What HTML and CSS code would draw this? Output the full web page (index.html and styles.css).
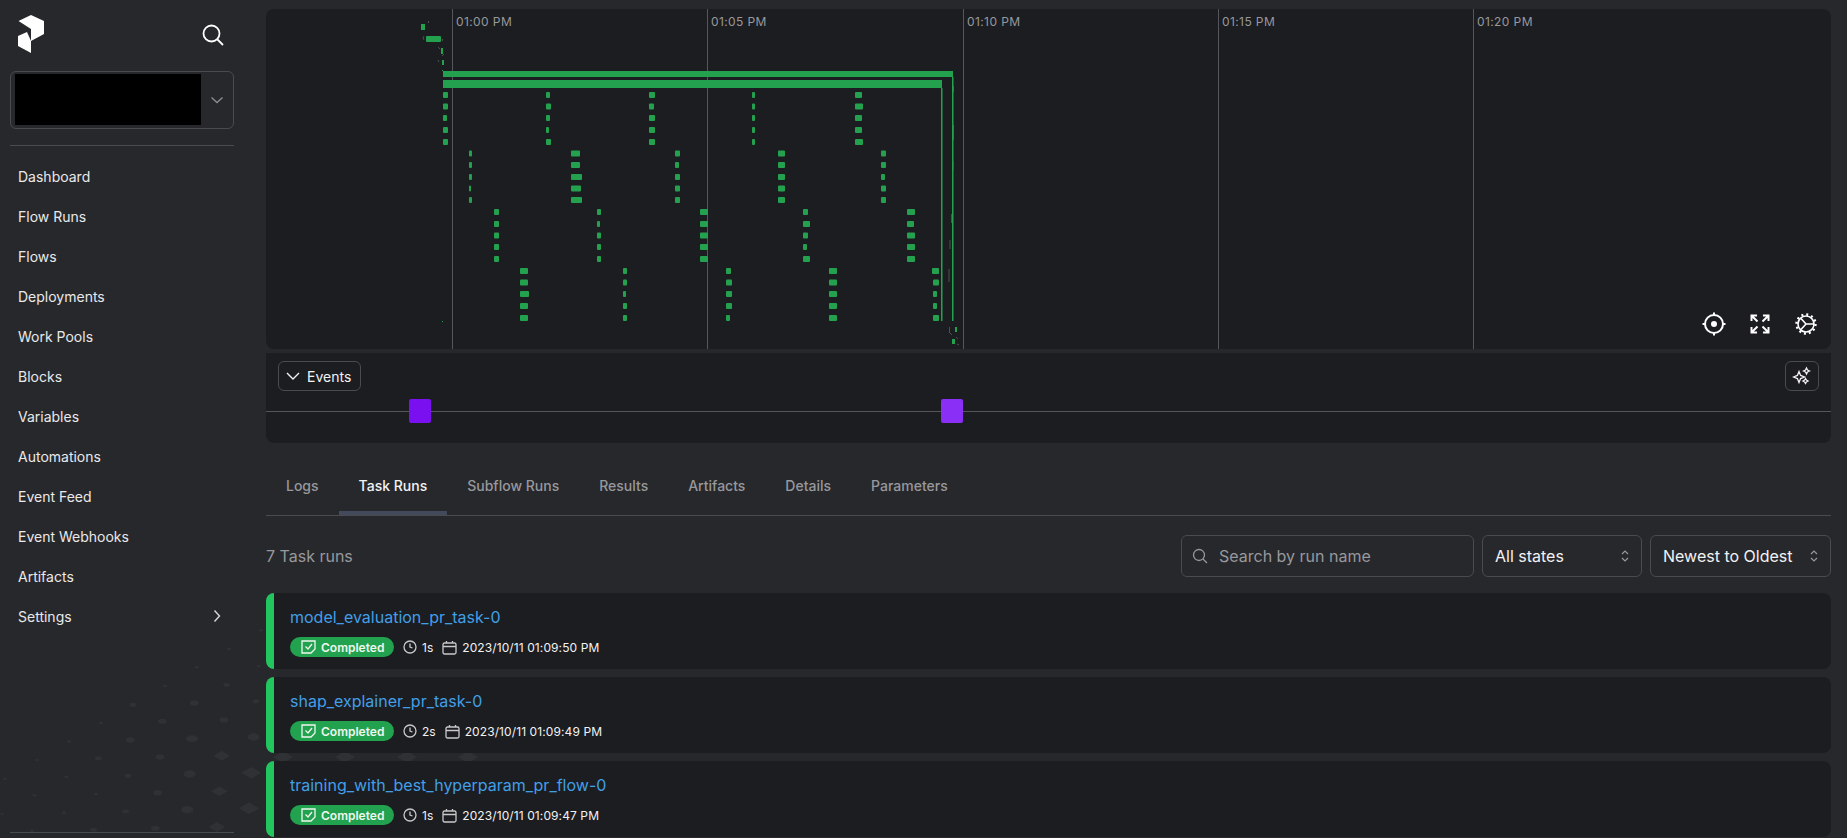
FILE: index.html
```html
<!DOCTYPE html>
<html lang="en">
<head>
<meta charset="utf-8">
<title>Flow run</title>
<link rel="stylesheet" href="styles.css">
</head>
<body>
<svg class="deco" width="500" height="218" viewBox="0 0 1500 654" aria-hidden="true">
  <ellipse cx="7" cy="581" rx="6" ry="3"/><ellipse cx="103" cy="526" rx="6" ry="4"/><ellipse cx="199" cy="471" rx="6" ry="4"/><ellipse cx="295" cy="415" rx="10" ry="6"/><ellipse cx="391" cy="360" rx="13" ry="8"/><ellipse cx="487" cy="304" rx="13" ry="8"/><ellipse cx="583" cy="249" rx="13" ry="8"/><ellipse cx="680" cy="194" rx="10" ry="6"/><ellipse cx="776" cy="138" rx="6" ry="4"/>
  <ellipse cx="15" cy="476" rx="6" ry="3"/><ellipse cx="111" cy="420" rx="6" ry="3"/><ellipse cx="207" cy="365" rx="6" ry="4"/><ellipse cx="303" cy="309" rx="6" ry="4"/><ellipse cx="399" cy="254" rx="10" ry="6"/><ellipse cx="495" cy="198" rx="6" ry="4"/><ellipse cx="591" cy="142" rx="6" ry="4"/><ellipse cx="687" cy="87" rx="6" ry="4"/><ellipse cx="783" cy="31" rx="6" ry="4"/>
  <ellipse cx="96" cy="633" rx="6" ry="4"/><ellipse cx="192" cy="578" rx="6" ry="4"/><ellipse cx="288" cy="522" rx="6" ry="4"/><ellipse cx="384" cy="467" rx="10" ry="6"/><ellipse cx="480" cy="411" rx="13" ry="8"/><ellipse cx="576" cy="356" rx="18" ry="10"/><ellipse cx="672" cy="300" rx="13" ry="8"/><ellipse cx="768" cy="244" rx="10" ry="6"/>
  <ellipse cx="281" cy="629" rx="10" ry="6"/><ellipse cx="377" cy="574" rx="10" ry="6"/><ellipse cx="473" cy="518" rx="13" ry="8"/><ellipse cx="569" cy="462" rx="18" ry="11"/><polygon points="640,407 665,392 690,407 665,422"/><ellipse cx="761" cy="351" rx="18" ry="11"/>
  <ellipse cx="466" cy="625" rx="13" ry="8"/><ellipse cx="562" cy="569" rx="18" ry="11"/><polygon points="633,514 658,499 683,514 658,529"/><polygon points="724,458 754,441 784,458 754,476"/>
  <polygon points="626,621 651,606 676,621 651,636"/><polygon points="716,565 747,547 778,565 747,583"/>
  <polygon points="819,411 849,394 879,411 849,429"/><polygon points="1005,411 1035,394 1065,411 1035,429"/><polygon points="1191,411 1221,394 1251,411 1221,429"/><polygon points="1374,411 1404,394 1434,411 1404,429"/>
</svg>

<aside class="sidebar">
  <div class="brand">
    <svg class="logo" width="26" height="38" viewBox="18 15 26 38" aria-label="Prefect">
      <polygon points="18.5,21 31,15 44,21 44,34 31,41 31,29"/>
      <polygon points="18,36 27,32 31,41 31,53 18,46"/>
    </svg>
    <svg class="search-icon" width="22" height="22" viewBox="0 0 22 22"><circle cx="9.5" cy="9.5" r="8"/><path d="M15.5 15.5 21 21"/></svg>
  </div>
  <div class="workspace">
    <div class="redacted"></div>
    <svg class="chev" width="14" height="8" viewBox="0 0 14 8"><path d="M1.5 1.5 7 6.5l5.500-5"/></svg>
  </div>
  <nav class="nav">
    <a class="nav-item">Dashboard</a>
    <a class="nav-item">Flow Runs</a>
    <a class="nav-item">Flows</a>
    <a class="nav-item">Deployments</a>
    <a class="nav-item">Work Pools</a>
    <a class="nav-item">Blocks</a>
    <a class="nav-item">Variables</a>
    <a class="nav-item">Automations</a>
    <a class="nav-item">Event Feed</a>
    <a class="nav-item">Event Webhooks</a>
    <a class="nav-item">Artifacts</a>
    <a class="nav-item nav-settings">Settings
      <svg class="nav-chev" width="8" height="14" viewBox="0 0 8 14"><path d="M1.500 1.500 6.500 7l-5 5.500"/></svg>
    </a>
  </nav>
  <div class="side-foot"></div>
</aside>

<main class="main">
  <section class="graph">
    <svg class="graph-svg" width="1565" height="340" viewBox="266 9 1565 340">
      <g class="grid">
        <line x1="452.500" y1="9" x2="452.500" y2="349"/><line x1="707.500" y1="9" x2="707.500" y2="349"/><line x1="963.500" y1="9" x2="963.500" y2="349"/><line x1="1218.500" y1="9" x2="1218.500" y2="349"/><line x1="1473.500" y1="9" x2="1473.500" y2="349"/>
      </g>
      <g class="time">
        <text x="456" y="25.500">01:00 PM</text><text x="711" y="25.500">01:05 PM</text><text x="967" y="25.500">01:10 PM</text><text x="1222" y="25.500">01:15 PM</text><text x="1477" y="25.500">01:20 PM</text>
      </g>
      <g class="ticks">
        <path d="M953.500 86v6M953.500 125v15M953 161v9M951.500 214v9M950 240v9M949 269v13M949.500 327v6M956 337l2 2M954 350l-3 3M950 333l2 2M957 344l2 1"/>
        <path d="M428 21l1 1-1 1M424 36l-1 2 1 2M442 39l1 1-1 1M438 47l2 2M444 54l-2 2M438 60l1 2"/>
      </g>
      <g class="bars">
        <rect x="421" y="24" width="4" height="6"/><rect x="426" y="36" width="15" height="6" rx="1"/><rect x="441" y="48" width="2" height="6"/><rect x="442" y="60" width="2" height="5"/><rect x="442" y="70" width="1" height="1"/><rect x="442" y="321" width="1" height="1"/>
        <rect x="443" y="71" width="510" height="6"/><rect x="443" y="80" width="499" height="8"/>
        <rect x="941" y="88" width="1.500" height="233"/><rect x="952" y="77" width="1.500" height="244"/>
        <rect x="955" y="327" width="2" height="5"/><rect x="952" y="339" width="3" height="5"/>
      </g>
      <g class="bars tasks">
        <rect x="443" y="92" width="5" height="6"/><rect x="443" y="103.500" width="5" height="6"/><rect x="443" y="115" width="4" height="6"/><rect x="443" y="127" width="5" height="6"/><rect x="443" y="139" width="5" height="6"/>
        <rect x="546" y="92" width="4" height="6"/><rect x="546" y="103.500" width="5" height="6"/><rect x="546" y="115" width="4" height="6"/><rect x="546" y="127" width="3" height="6"/><rect x="546" y="139" width="5" height="6"/>
        <rect x="649" y="92" width="6" height="6"/><rect x="649" y="103.500" width="5" height="6"/><rect x="649" y="115" width="6" height="6"/><rect x="649" y="127" width="6" height="6"/><rect x="649" y="139" width="6" height="6"/>
        <rect x="752" y="92" width="3" height="6"/><rect x="752" y="103.500" width="3" height="6"/><rect x="752" y="115" width="3" height="6"/><rect x="752" y="127" width="3" height="6"/><rect x="752" y="139" width="3" height="6"/>
        <rect x="855" y="92" width="7" height="6"/><rect x="855" y="103.500" width="8" height="6"/><rect x="855" y="115" width="7" height="6"/><rect x="855" y="127" width="7" height="6"/><rect x="855" y="139" width="8" height="6"/>

        <rect x="469" y="150.500" width="3" height="6"/><rect x="469" y="162" width="3" height="6"/><rect x="469" y="174" width="3" height="6"/><rect x="469" y="185.500" width="2" height="6"/><rect x="469" y="197" width="3" height="6"/>
        <rect x="571" y="150.500" width="9" height="6"/><rect x="571" y="162" width="9" height="6"/><rect x="571" y="174" width="11" height="6"/><rect x="571" y="185.500" width="10" height="6"/><rect x="571" y="197" width="11" height="6"/>
        <rect x="675" y="150.500" width="5" height="6"/><rect x="675" y="162" width="4" height="6"/><rect x="675" y="174" width="5" height="6"/><rect x="675" y="185.500" width="5" height="6"/><rect x="675" y="197" width="5" height="6"/>
        <rect x="778" y="150.500" width="7" height="6"/><rect x="778" y="162" width="7" height="6"/><rect x="778" y="174" width="7" height="6"/><rect x="778" y="185.500" width="7" height="6"/><rect x="778" y="197" width="7" height="6"/>
        <rect x="881" y="150.500" width="5" height="6"/><rect x="881" y="162" width="5" height="6"/><rect x="881" y="174" width="4" height="6"/><rect x="881" y="185.500" width="5" height="6"/><rect x="881" y="197" width="5" height="6"/>

        <rect x="494" y="209" width="5" height="6"/><rect x="494" y="221" width="5" height="6"/><rect x="494" y="232.500" width="5" height="6"/><rect x="494" y="244" width="5" height="6"/><rect x="494" y="256" width="5" height="6"/>
        <rect x="597" y="209" width="4" height="6"/><rect x="597" y="221" width="3" height="6"/><rect x="597" y="232.500" width="4" height="6"/><rect x="597" y="244" width="4" height="6"/><rect x="597" y="256" width="4" height="6"/>
        <rect x="700" y="209" width="8" height="6"/><rect x="700" y="221" width="8" height="6"/><rect x="700" y="232.500" width="8" height="6"/><rect x="700" y="244" width="8" height="6"/><rect x="700" y="256" width="8" height="6"/>
        <rect x="803" y="209" width="5" height="6"/><rect x="803" y="221" width="7" height="6"/><rect x="803" y="232.500" width="5" height="6"/><rect x="803" y="244" width="4" height="6"/><rect x="803" y="256" width="7" height="6"/>
        <rect x="907" y="209" width="8" height="6"/><rect x="907" y="221" width="7" height="6"/><rect x="907" y="232.500" width="8" height="6"/><rect x="907" y="244" width="8" height="6"/><rect x="907" y="256" width="8" height="6"/>

        <rect x="520" y="268" width="8" height="6"/><rect x="520" y="279.500" width="8" height="6"/><rect x="520" y="291" width="9" height="6"/><rect x="520" y="303" width="8" height="6"/><rect x="520" y="315" width="8" height="6"/>
        <rect x="623" y="268" width="4" height="6"/><rect x="623" y="279.500" width="4" height="6"/><rect x="623" y="291" width="3" height="6"/><rect x="623" y="303" width="4" height="6"/><rect x="623" y="315" width="4" height="6"/>
        <rect x="726" y="268" width="5" height="6"/><rect x="726" y="279.500" width="6" height="6"/><rect x="726" y="291" width="6" height="6"/><rect x="726" y="303" width="6" height="6"/><rect x="726" y="315" width="4" height="6"/>
        <rect x="829" y="268" width="8" height="6"/><rect x="829" y="279.500" width="8" height="6"/><rect x="829" y="291" width="8" height="6"/><rect x="829" y="303" width="8" height="6"/><rect x="829" y="315" width="8" height="6"/>
        <rect x="932" y="268" width="7" height="6"/><rect x="933" y="279.500" width="6" height="6"/><rect x="933" y="291" width="4" height="6"/><rect x="933" y="303" width="4" height="6"/><rect x="933" y="315" width="6" height="6"/>
      </g>
    </svg>
    <div class="graph-tools">
      <svg width="24" height="24" viewBox="0 0 24 24"><circle cx="12" cy="12" r="9"/><circle class="solid" cx="12" cy="12" r="3"/><path d="M12 0.500v2.500M12 21v2.500M0.500 12H3M21 12h2.500"/></svg>
      <svg width="20" height="20" viewBox="0 0 20 20"><path d="M1.500 7V1.500H7M1.500 1.500 7.500 7.500M13 1.500h5.500V7M18.500 1.500l-6 6M1.500 13v5.500H7M1.500 18.500l6-6M13 18.500h5.500V13M18.500 18.500l-6-6"/></svg>
      <svg width="22" height="22" viewBox="0 0 22 22"><circle cx="11" cy="11" r="8"/><circle class="teeth" cx="11" cy="11" r="9.500"/><path d="M6 5.500 11 11l-5 5.500M11 11h8"/></svg>
    </div>
  </section>

  <section class="events">
    <div class="events-head">
      <button class="btn-events">
        <svg width="14" height="8" viewBox="0 0 14 8"><path d="M1 1l6 6 6-6"/></svg>
        <span>Events</span>
      </button>
      <button class="btn-spark">
        <svg width="20" height="20" viewBox="0 0 20 20"><path d="M7 5.500 8.600 9.400 12.500 11 8.600 12.600 7 16.500 5.400 12.600 1.500 11 5.400 9.400Z"/><path d="M14.500 2 15.500 4 17.500 5 15.500 6 14.500 8 13.500 6 11.500 5 13.500 4Z"/><path d="M13.500 12.500 14.400 14.100 16 15 14.400 15.900 13.500 17.500 12.600 15.900 11 15 12.600 14.100Z"/></svg>
      </button>
    </div>
    <div class="events-line">
      <span class="event-mark event-a"></span>
      <span class="event-mark event-b"></span>
    </div>
  </section>

  <nav class="tabs">
    <a class="tab">Logs</a>
    <a class="tab tab-active">Task Runs</a>
    <a class="tab">Subflow Runs</a>
    <a class="tab">Results</a>
    <a class="tab">Artifacts</a>
    <a class="tab">Details</a>
    <a class="tab">Parameters</a>
  </nav>

  <div class="toolbar">
    <span class="count">7 Task runs</span>
    <div class="control control-search">
      <svg class="ico-search" width="16" height="16" viewBox="0 0 16 16"><circle cx="7" cy="7" r="5.500"/><path d="M11 11l4 4"/></svg>
      <span class="placeholder">Search by run name</span>
    </div>
    <div class="control control-states">
      <span>All states</span>
      <svg class="updown" width="8" height="14" viewBox="0 0 8 14"><path d="M1 5 4 2l3 3M1 9l3 3 3-3"/></svg>
    </div>
    <div class="control control-sort">
      <span>Newest to Oldest</span>
      <svg class="updown" width="8" height="14" viewBox="0 0 8 14"><path d="M1 5 4 2l3 3M1 9l3 3 3-3"/></svg>
    </div>
  </div>

  <div class="runs">
    <article class="run">
      <a class="run-name">model_evaluation_pr_task-0</a>
      <div class="run-meta">
        <span class="badge">
          <svg width="15" height="14" viewBox="0 0 15 14"><path d="M1 1h13v8l-4 4H1ZM4.500 6.500l2.500 2.500 4-5"/></svg>
          Completed
        </span>
        <svg class="meta-ico clock" width="14" height="14" viewBox="0 0 14 14"><circle cx="7" cy="7" r="6"/><path d="M7 3.500V7l2.500 1"/></svg>
        <span class="meta-text">1s</span>
        <svg class="meta-ico cal" width="15" height="15" viewBox="0 0 15 15"><rect x="1" y="3" width="13" height="11" rx="1.500"/><path d="M1 6.500h13M4.500 1v2M10.500 1v2"/></svg>
        <span class="meta-date">2023/10/11 01:09:50 PM</span>
      </div>
    </article>
    <article class="run">
      <a class="run-name">shap_explainer_pr_task-0</a>
      <div class="run-meta">
        <span class="badge">
          <svg width="15" height="14" viewBox="0 0 15 14"><path d="M1 1h13v8l-4 4H1ZM4.500 6.500l2.500 2.500 4-5"/></svg>
          Completed
        </span>
        <svg class="meta-ico clock" width="14" height="14" viewBox="0 0 14 14"><circle cx="7" cy="7" r="6"/><path d="M7 3.500V7l2.500 1"/></svg>
        <span class="meta-text">2s</span>
        <svg class="meta-ico cal" width="15" height="15" viewBox="0 0 15 15"><rect x="1" y="3" width="13" height="11" rx="1.500"/><path d="M1 6.500h13M4.500 1v2M10.500 1v2"/></svg>
        <span class="meta-date">2023/10/11 01:09:49 PM</span>
      </div>
    </article>
    <article class="run">
      <a class="run-name">training_with_best_hyperparam_pr_flow-0</a>
      <div class="run-meta">
        <span class="badge">
          <svg width="15" height="14" viewBox="0 0 15 14"><path d="M1 1h13v8l-4 4H1ZM4.500 6.500l2.500 2.500 4-5"/></svg>
          Completed
        </span>
        <svg class="meta-ico clock" width="14" height="14" viewBox="0 0 14 14"><circle cx="7" cy="7" r="6"/><path d="M7 3.500V7l2.500 1"/></svg>
        <span class="meta-text">1s</span>
        <svg class="meta-ico cal" width="15" height="15" viewBox="0 0 15 15"><rect x="1" y="3" width="13" height="11" rx="1.500"/><path d="M1 6.500h13M4.500 1v2M10.500 1v2"/></svg>
        <span class="meta-date">2023/10/11 01:09:47 PM</span>
      </div>
    </article>
  </div>
</main>
</body>
</html>
```

FILE: styles.css
```css
* { box-sizing: border-box; }

html { background: #27282c; }

body {
  margin: 0;
  width: 1847px;
  height: 838px;
  overflow: hidden;
  display: flex;
  font-family: Inter, "Liberation Sans", sans-serif;
  color: #f2f2f3;
}

svg { display: block; flex: none; fill: none; stroke: currentColor; }

.deco {
  position: absolute;
  left: 0;
  bottom: 0;
  z-index: -1;
  fill: #303135;
  stroke: none;
}

/* Sidebar */
.sidebar {
  width: 266px;
  flex: none;
  height: 838px;
  padding: 0 32px 0 10px;
  display: flex;
  flex-direction: column;
}

.brand {
  height: 71px;
  padding: 15px 10px 0 8px;
  display: flex;
  justify-content: space-between;
  align-items: flex-start;
}

.logo { fill: #fff; stroke: none; }

.search-icon {
  margin-top: 9px;
  color: #fff;
  stroke-width: 1.800;
}

.workspace {
  height: 58px;
  border: 1px solid #4a4b50;
  border-radius: 6px;
  padding: 2px 9px 3px 4px;
  display: flex;
  align-items: center;
  justify-content: space-between;
}

.redacted { width: 186px; height: 51px; background: #000; }

.chev { color: #8d8e93; stroke-width: 1.300; }

.nav {
  margin-top: 16px;
  padding-top: 10px;
  border-top: 1px solid #4a4b50;
  display: flex;
  flex-direction: column;
}

.nav-item {
  height: 40px;
  padding: 0 13px 0 8px;
  display: flex;
  align-items: center;
  justify-content: space-between;
  font-size: 14px;
  color: #e9e9ea;
}

.nav-chev { color: #d8d8da; stroke-width: 1.400; }

.side-foot {
  margin-top: auto;
  margin-bottom: 5px;
  border-top: 1px solid #4a4b50;
}

/* Main column */
.main {
  width: 1565px;
  flex: none;
  padding-top: 9px;
  display: flex;
  flex-direction: column;
}

.graph {
  position: relative;
  height: 340px;
  background: #1c1d21;
  border-radius: 8px;
  overflow: hidden;
}

.grid line { stroke: #55565c; stroke-width: 1; }

.time text {
  fill: #97989c;
  stroke: none;
  font-family: Inter, "Liberation Sans", sans-serif;
  font-size: 12px;
  letter-spacing: 0.4px;
}

.ticks path { stroke: #4f5055; stroke-width: 1; }

.bars rect { fill: #24a14e; stroke: none; }
.tasks rect { rx: 1px; }

.graph-tools {
  position: absolute;
  right: 14px;
  bottom: 13px;
  display: flex;
  align-items: center;
  gap: 25px;
  color: #fff;
}

.graph-tools svg { stroke-width: 2; }
.graph-tools svg:first-child { margin-right: -1px; }
.graph-tools .solid { fill: #fff; stroke: none; }
.graph-tools .teeth { stroke-width: 2.400; stroke-dasharray: 2 2.970; }
.graph-tools svg:last-child { stroke-width: 1.600; }

.events {
  margin-top: 4px;
  height: 90px;
  background: #1c1d21;
  border-radius: 0 0 8px 8px;
  display: flex;
  flex-direction: column;
}

.events-head {
  height: 38px;
  padding: 8px 12px 0 12px;
  display: flex;
  justify-content: space-between;
  flex: none;
}

.btn-events,
.btn-spark {
  height: 30px;
  background: none;
  border: 1px solid #4a4b50;
  border-radius: 6px;
  color: #f2f2f3;
  padding: 0;
  display: flex;
  align-items: center;
  font-family: inherit;
}

.btn-events {
  width: 83px;
  padding-left: 7px;
  gap: 7px;
  font-size: 14px;
}

.btn-events svg { stroke-width: 1.400; }

.btn-spark {
  width: 34px;
  justify-content: center;
}

.btn-spark svg { stroke-width: 1.300; }

.events-line {
  position: relative;
  margin-top: 20px;
  height: 1px;
  background: #55565c;
}

.event-mark {
  position: absolute;
  top: -12px;
  width: 22px;
  height: 24px;
  border-radius: 2px;
}

.event-a { left: 143px; background: #7a0ff0; }
.event-b { left: 675px; background: #8a2ff5; }

/* Tabs */
.tabs {
  margin-top: 12px;
  height: 61px;
  display: flex;
  border-bottom: 1px solid #4a4b50;
}

.tab {
  height: 60px;
  padding: 0 20px;
  display: flex;
  align-items: center;
  font-size: 14px;
  font-weight: 500;
  color: #97989c;
}

.tab-active {
  color: #f2f2f3;
  border-bottom: 4px solid #434a5c;
  padding-top: 4px;
}

/* Toolbar */
.toolbar {
  margin-top: 19px;
  height: 42px;
  display: flex;
  align-items: center;
  gap: 8px;
}

.count {
  flex: 1;
  font-size: 16px;
  color: #97989c;
}

.control {
  height: 42px;
  border: 1px solid #4a4b50;
  border-radius: 6px;
  display: flex;
  align-items: center;
  font-size: 16px;
  color: #f2f2f3;
}

.control-search { width: 293px; padding-left: 10px; gap: 11px; }
.control-states { width: 160px; padding: 0 12px; justify-content: space-between; }
.control-sort { width: 181px; padding: 0 12px; justify-content: space-between; }

.ico-search { color: #97989c; stroke-width: 1.300; }
.placeholder { color: #97989c; }
.updown { color: #97989c; stroke-width: 1.200; }

/* Run cards */
.runs {
  margin-top: 16px;
  display: flex;
  flex-direction: column;
  gap: 8px;
}

.run {
  height: 76px;
  flex: none;
  background: #1c1d21;
  border-left: 8px solid #22c55e;
  border-radius: 8px;
  padding: 12px 16px 0;
}

.run-name {
  display: block;
  height: 24px;
  line-height: 24px;
  font-size: 16px;
  color: #429fe6;
}

.run-meta {
  margin-top: 8px;
  height: 20px;
  display: flex;
  align-items: center;
  font-size: 12px;
  color: #f2f2f3;
}

.badge {
  width: 104px;
  height: 20px;
  border-radius: 10px;
  background: #22a24e;
  padding-left: 11px;
  display: flex;
  align-items: center;
  gap: 5px;
  font-weight: 600;
  color: #eef7f0;
}

.badge svg { stroke-width: 1.300; }

.meta-ico { color: #c9c9cc; stroke-width: 1.300; }
.clock { margin-left: 9px; }
.meta-text { margin-left: 5px; }
.cal { margin-left: 9px; }
.meta-date { margin-left: 5px; letter-spacing: 0.1px; }
```
